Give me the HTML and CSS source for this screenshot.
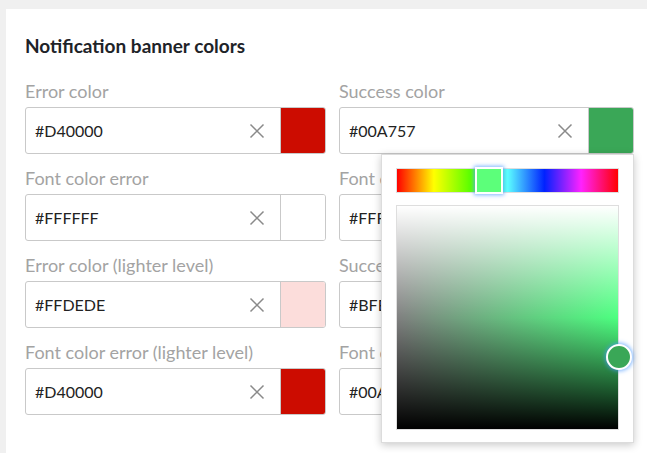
FILE: index.html
```html
<!DOCTYPE html>
<html lang="en">
<head>
    <meta charset="UTF-8">
    <meta name="viewport" content="width=device-width, initial-scale=1.0">
    <title>Notification banner colors</title>
    <link rel="stylesheet" href="styles.css">
</head>
<body>
    <div class="settings-card">
        <h2 class="section-title">Notification banner colors</h2>

        <div class="color-grid">
            <!-- left column -->
            <div class="color-field">
                <label class="field-label">Error color</label>
                <div class="color-input">
                    <input type="text" value="#D40000">
                    <span class="clear-btn"><svg width="16" height="16" viewBox="0 0 16 16"><path d="M1.5 1.5L14.5 14.5M14.5 1.5L1.5 14.5"/></svg></span>
                    <span class="swatch swatch-red"></span>
                </div>
            </div>
            <div class="color-field">
                <label class="field-label">Success color</label>
                <div class="color-input">
                    <input type="text" value="#00A757">
                    <span class="clear-btn"><svg width="16" height="16" viewBox="0 0 16 16"><path d="M1.5 1.5L14.5 14.5M14.5 1.5L1.5 14.5"/></svg></span>
                    <span class="swatch swatch-green"></span>
                </div>

                <!-- open color picker -->
                <div class="picker-popup">
                    <div class="hue-bar">
                        <span class="hue-handle"></span>
                    </div>
                    <div class="shade-area">
                        <span class="shade-handle"></span>
                    </div>
                </div>
            </div>

            <div class="color-field">
                <label class="field-label">Font color error</label>
                <div class="color-input">
                    <input type="text" value="#FFFFFF">
                    <span class="clear-btn"><svg width="16" height="16" viewBox="0 0 16 16"><path d="M1.5 1.5L14.5 14.5M14.5 1.5L1.5 14.5"/></svg></span>
                    <span class="swatch swatch-white"></span>
                </div>
            </div>
            <div class="color-field">
                <label class="field-label">Font color success</label>
                <div class="color-input">
                    <input type="text" value="#FFFFFF">
                    <span class="clear-btn"><svg width="16" height="16" viewBox="0 0 16 16"><path d="M1.5 1.5L14.5 14.5M14.5 1.5L1.5 14.5"/></svg></span>
                    <span class="swatch swatch-white"></span>
                </div>
            </div>

            <div class="color-field">
                <label class="field-label">Error color (lighter level)</label>
                <div class="color-input">
                    <input type="text" value="#FFDEDE">
                    <span class="clear-btn"><svg width="16" height="16" viewBox="0 0 16 16"><path d="M1.5 1.5L14.5 14.5M14.5 1.5L1.5 14.5"/></svg></span>
                    <span class="swatch swatch-pink"></span>
                </div>
            </div>
            <div class="color-field">
                <label class="field-label">Success color (lighter level)</label>
                <div class="color-input">
                    <input type="text" value="#BFE9CC">
                    <span class="clear-btn"><svg width="16" height="16" viewBox="0 0 16 16"><path d="M1.5 1.5L14.5 14.5M14.5 1.5L1.5 14.5"/></svg></span>
                    <span class="swatch swatch-mint"></span>
                </div>
            </div>

            <div class="color-field">
                <label class="field-label">Font color error (lighter level)</label>
                <div class="color-input">
                    <input type="text" value="#D40000">
                    <span class="clear-btn"><svg width="16" height="16" viewBox="0 0 16 16"><path d="M1.5 1.5L14.5 14.5M14.5 1.5L1.5 14.5"/></svg></span>
                    <span class="swatch swatch-red"></span>
                </div>
            </div>
            <div class="color-field">
                <label class="field-label">Font color success (lighter level)</label>
                <div class="color-input">
                    <input type="text" value="#00A757">
                    <span class="clear-btn"><svg width="16" height="16" viewBox="0 0 16 16"><path d="M1.5 1.5L14.5 14.5M14.5 1.5L1.5 14.5"/></svg></span>
                    <span class="swatch swatch-green"></span>
                </div>
            </div>
        </div>
    </div>
</body>
</html>
```

FILE: styles.css
```css
body {
    margin: 0;
    padding: 9px 0 0 6px;
    background-color: #f0f0f0;
    font-family: Lato, "Open Sans", sans-serif;
    overflow: hidden;
}

.settings-card {
    background-color: #ffffff;
    padding: 28px 0 40px 19px;
    min-height: 460px;
    box-sizing: border-box;
}

.section-title {
    margin: 0 0 24px 0;
    font-size: 19px;
    line-height: 18px;
    font-weight: 700;
    color: #1e2328;
}

.color-grid {
    display: grid;
    grid-template-columns: 301px 295px;
    column-gap: 13px;
    row-gap: 12px;
}

.color-field {
    position: relative;
}

.field-label {
    display: block;
    font-size: 18px;
    line-height: 24px;
    color: #a3a3a3;
    margin-bottom: 4px;
    white-space: nowrap;
}

.color-input {
    display: flex;
    align-items: stretch;
    height: 47px;
    border: 1px solid #c9c9c9;
    border-radius: 3px;
    box-sizing: border-box;
    overflow: hidden;
}

.color-input input {
    flex: 1;
    min-width: 0;
    border: none;
    outline: none;
    padding: 0 0 0 9px;
    font-family: Lato, "Open Sans", sans-serif;
    font-size: 16px;
    color: #222;
    background: transparent;
}

.clear-btn {
    display: flex;
    align-items: center;
    justify-content: center;
    width: 36px;
    margin-right: 5px;
}

.clear-btn svg path {
    stroke: #8a8a8a;
    stroke-width: 1.5;
    fill: none;
}

.swatch {
    width: 44px;
    border-left: 1px solid #c9c9c9;
}

.swatch-red { background-color: #cc0c00; }
.swatch-green { background-color: #3aa757; }
.swatch-white { background-color: #ffffff; }
.swatch-pink { background-color: #fcdddb; }
.swatch-mint { background-color: #bfe9cc; }

/* color picker dropdown */
.picker-popup {
    position: absolute;
    top: 75px;
    left: 42px;
    width: 253px;
    height: 289px;
    box-sizing: border-box;
    padding: 13px 14px;
    background-color: #ffffff;
    border: 1px solid #dcdcdc;
    box-shadow: 0 2px 8px rgba(0, 0, 0, 0.22);
    z-index: 5;
}

.hue-bar {
    position: relative;
    height: 25px;
    box-sizing: border-box;
    border: 1px solid #dedede;
    background: linear-gradient(to right,
        #ff0000 0%, #ffff00 16.7%, #5cff00 33%, #5cffff 50%,
        #0022ff 66.7%, #ff22ff 83.3%, #ff0000 100%);
}

.hue-handle {
    position: absolute;
    left: 78px;
    top: -2px;
    width: 28px;
    height: 27px;
    box-sizing: border-box;
    border: 2px solid #ffffff;
    background-color: #5cff7a;
    box-shadow: 0 0 4px 1px rgba(70, 150, 255, 0.7);
}

.shade-area {
    position: relative;
    margin-top: 12px;
    height: 225px;
    box-sizing: border-box;
    border: 1px solid #dedede;
    background:
        linear-gradient(to bottom, #ffffff 0%, rgba(255, 255, 255, 0) 50%, rgba(0, 0, 0, 0) 50%, #000000 100%),
        linear-gradient(to right, #808080 0%, #4dff80 100%);
}

.shade-handle {
    position: absolute;
    right: -14px;
    top: 138px;
    width: 26px;
    height: 26px;
    box-sizing: border-box;
    border-radius: 50%;
    border: 2px solid #ffffff;
    background-color: #3aa757;
    box-shadow: 0 0 4px 1px rgba(70, 150, 255, 0.7);
}
```
